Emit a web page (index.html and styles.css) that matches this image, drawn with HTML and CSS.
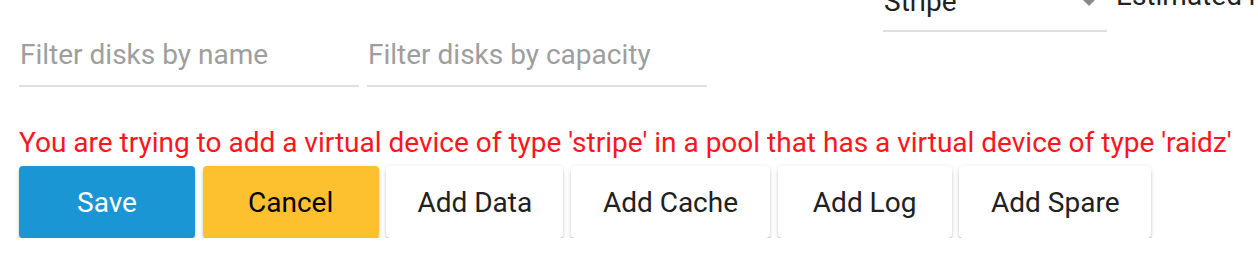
FILE: index.html
```html
<!DOCTYPE html>
<html lang="en">
<head>
<meta charset="utf-8">
<title>Pool</title>
<link rel="stylesheet" href="styles.css">
</head>
<body>
<div class="page">
  <div class="top">
    <div class="filters">
      <input class="filter" type="text" placeholder="Filter disks by name">
      <input class="filter" type="text" placeholder="Filter disks by capacity">
    </div>
    <div class="select">
      <span class="select-value">Stripe</span>
      <span class="select-arrow"></span>
    </div>
    <div class="estimated">Estimated raw capacity</div>
  </div>
  <div class="error">You are trying to add a virtual device of type 'stripe' in a pool that has a virtual device of type 'raidz'</div>
  <div class="actions">
    <button class="btn btn-primary btn-save">Save</button>
    <button class="btn btn-accent btn-cancel">Cancel</button>
    <button class="btn btn-data">Add Data</button>
    <button class="btn btn-cache">Add Cache</button>
    <button class="btn btn-log">Add Log</button>
    <button class="btn btn-spare">Add Spare</button>
  </div>
</div>
</body>
</html>
```

FILE: styles.css
```css
html, body {
  margin: 0;
  padding: 0;
  background: #ffffff;
  overflow: hidden;
}

body {
  font-family: Roboto, "Liberation Sans", Arial, sans-serif;
  font-size: 28px;
  color: #212121;
}

.page {
  padding-left: 19px;
  width: 1400px;
}

.top {
  display: flex;
  align-items: flex-start;
  margin-top: -14px;
}

.filters {
  display: flex;
  gap: 8px;
  margin-top: 52px;
}

.filter {
  box-sizing: border-box;
  width: 340px;
  height: 49px;
  padding: 0 0 15px 1px;
  margin: 0;
  border: none;
  border-bottom: 2px solid #e0e0e0;
  outline: none;
  background: transparent;
  font-family: inherit;
  font-size: 28px;
  line-height: 32px;
  color: #212121;
}

.filter::placeholder {
  color: #9e9e9e;
  opacity: 1;
}

.select {
  display: flex;
  align-items: flex-start;
  width: 224px;
  margin-left: 176px;
  padding-bottom: 12px;
  border-bottom: 2px solid #e0e0e0;
  line-height: 32px;
}

.select-value {
  flex: 1;
  padding-left: 1px;
  color: #212121;
}

.select-arrow {
  width: 0;
  height: 0;
  margin-top: 11px;
  margin-right: 9px;
  border-left: 9px solid transparent;
  border-right: 9px solid transparent;
  border-top: 9px solid #8a8a8a;
}

.estimated {
  margin-left: 9px;
  margin-top: -6px;
  line-height: 32px;
  white-space: nowrap;
  color: #212121;
}

.error {
  margin-top: 40px;
  line-height: 32px;
  color: #ff1420;
  white-space: nowrap;
}

.actions {
  display: flex;
  gap: 7.67px;
  margin-top: 7px;
}

.btn {
  box-sizing: border-box;
  height: 72px;
  padding: 0;
  border: none;
  border-radius: 4px;
  background: #ffffff;
  color: #212121;
  font-family: inherit;
  font-size: 28px;
  text-align: center;
  white-space: nowrap;
  box-shadow: 0 4px 3px -1px rgba(0, 0, 0, 0.32), 0 1px 5px 0 rgba(0, 0, 0, 0.12);
  cursor: pointer;
}

.btn-save,
.btn-cancel {
  width: 176px;
}

.btn-data {
  width: 177px;
}

.btn-cache {
  width: 199px;
}

.btn-log {
  width: 174px;
}

.btn-spare {
  width: 192px;
}

.btn-primary {
  background: #1b96d4;
  color: #ffffff;
}

.btn-accent {
  background: #fdc02f;
  color: #000000;
}
```
